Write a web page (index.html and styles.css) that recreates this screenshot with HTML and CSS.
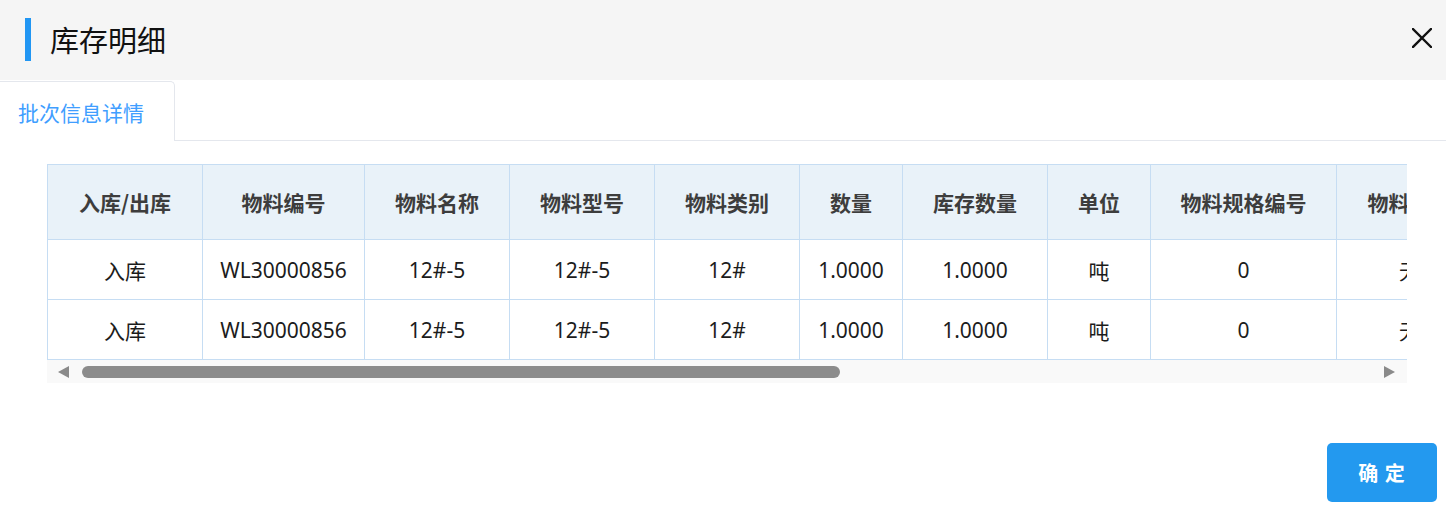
FILE: index.html
```html
<!DOCTYPE html>
<html lang="zh-CN">
<head>
<meta charset="utf-8">
<title>库存明细</title>
<link rel="stylesheet" href="styles.css">
</head>
<body>
<div class="dialog">
  <header class="dlg-header">
    <div class="dlg-title"><span class="title-bar"></span><span class="title-text">库存明细</span></div>
    <button class="close-btn" aria-label="关闭">
      <svg width="20" height="20" viewBox="0 0 20 20"><path d="M1 1 L19 19 M19 1 L1 19" stroke="#111" stroke-width="2.4" stroke-linecap="square" fill="none"/></svg>
    </button>
  </header>
  <nav class="tabs">
    <div class="tab active">批次信息详情</div>
  </nav>
  <section class="content">
    <div class="table-wrap">
      <div class="table-clip">
        <table class="grid">
          <colgroup>
            <col class="c1"><col class="c2"><col class="c3"><col class="c4"><col class="c5"><col class="c6"><col class="c7"><col class="c8"><col class="c9"><col class="c10">
          </colgroup>
          <thead>
            <tr><th>入库/出库</th><th>物料编号</th><th>物料名称</th><th>物料型号</th><th>物料类别</th><th>数量</th><th>库存数量</th><th>单位</th><th>物料规格编号</th><th>物料规格</th></tr>
          </thead>
          <tbody>
            <tr><td>入库</td><td>WL30000856</td><td>12#-5</td><td>12#-5</td><td>12#</td><td>1.0000</td><td>1.0000</td><td>吨</td><td>0</td><td>无</td></tr>
            <tr><td>入库</td><td>WL30000856</td><td>12#-5</td><td>12#-5</td><td>12#</td><td>1.0000</td><td>1.0000</td><td>吨</td><td>0</td><td>无</td></tr>
          </tbody>
        </table>
      </div>
      <div class="hscroll">
        <span class="arrow left"></span>
        <div class="track"><div class="thumb"></div></div>
        <span class="arrow right"></span>
      </div>
    </div>
  </section>
  <footer class="dlg-footer">
    <button class="ok-btn">确 定</button>
  </footer>
</div>
</body>
</html>
```

FILE: styles.css
```css
* { box-sizing: border-box; }
html, body { margin: 0; padding: 0; background: #fff; }
body { font-family: "Noto Sans", "Noto Sans CJK SC", sans-serif; color: #222; }

.dialog { width: 1446px; height: 516px; display: flex; flex-direction: column; }

.dlg-header {
  height: 80px;
  background: #f5f5f5;
  display: flex;
  align-items: center;
  justify-content: space-between;
  padding: 0 14px 0 25px;
}
.dlg-title { display: flex; align-items: center; }
.title-bar { width: 6px; height: 43px; background: #2196f3; margin-top: -1px; }
.title-text {
  margin-left: 19px;
  font-family: "Noto Sans CJK SC", sans-serif;
  font-size: 29px;
  color: #111;
  line-height: 1;
  margin-top: -1px;
}
.close-btn {
  border: 0; background: none; padding: 0; width: 20px; height: 20px;
  display: flex; cursor: pointer; margin-top: -5px;
}

.tabs {
  height: 61px;
  padding-top: 1px;
  border-bottom: 1px solid #e4e7ed;
  display: flex;
}
.tab {
  width: 175px;
  height: 60px;
  border: 1px solid #e4e7ed;
  border-left: 0;
  border-bottom: 0;
  border-top-right-radius: 5px;
  background: #fff;
  font-family: "Noto Sans CJK SC", sans-serif;
  font-size: 21px;
  color: #409eff;
  padding-left: 18px;
  display: flex;
  align-items: center;
  margin-bottom: -1px;
  padding-top: 1px;
}

.content { padding: 23px 0 0 47px; }
.table-wrap { width: 1360px; }
.table-clip { width: 1360px; overflow: hidden; }

.grid {
  border-collapse: collapse;
  table-layout: fixed;
  width: 1435px;
  font-size: 21px;
}
.grid col.c1 { width: 155px; }
.grid col.c2 { width: 162px; }
.grid col.c3 { width: 145px; }
.grid col.c4 { width: 145px; }
.grid col.c5 { width: 145px; }
.grid col.c6 { width: 103px; }
.grid col.c7 { width: 145px; }
.grid col.c8 { width: 103px; }
.grid col.c9 { width: 186px; }
.grid col.c10 { width: 146px; }

.grid th, .grid td {
  border: 1px solid #c6ddf3;
  text-align: center;
  white-space: nowrap;
  overflow: hidden;
  padding: 0;
}
.grid th {
  height: 75px;
  background: #e9f2f9;
  font-family: "Noto Sans CJK SC", sans-serif;
  font-weight: 700;
  color: #3d3d3d;
}
.grid td {
  height: 60px;
  color: #1c1c1c;
  font-family: "Noto Sans", "Noto Sans CJK SC", sans-serif;
}

.hscroll {
  height: 23px;
  background: #f9f9f9;
  display: flex;
  align-items: center;
}
.arrow { flex: none; width: 0; height: 0; border-top: 6px solid transparent; border-bottom: 6px solid transparent; }
.arrow.left { border-right: 11px solid #8a8a8a; margin-left: 11px; }
.arrow.right { border-left: 11px solid #8a8a8a; margin-right: 12px; }
.track { flex: 1; height: 12px; padding-left: 13px; padding-right: 544px; }
.thumb { height: 12px; background: #8c8c8c; border-radius: 6px; }

.dlg-footer {
  display: flex;
  justify-content: flex-end;
  padding: 60px 9px 0 0;
}
.ok-btn {
  width: 110px;
  height: 59px;
  border: 0;
  border-radius: 5px;
  background: #2399ef;
  color: #fff;
  font-family: "Noto Sans CJK SC", sans-serif;
  font-weight: 700;
  font-size: 20px;
  letter-spacing: 1px;
  cursor: pointer;
}
```
